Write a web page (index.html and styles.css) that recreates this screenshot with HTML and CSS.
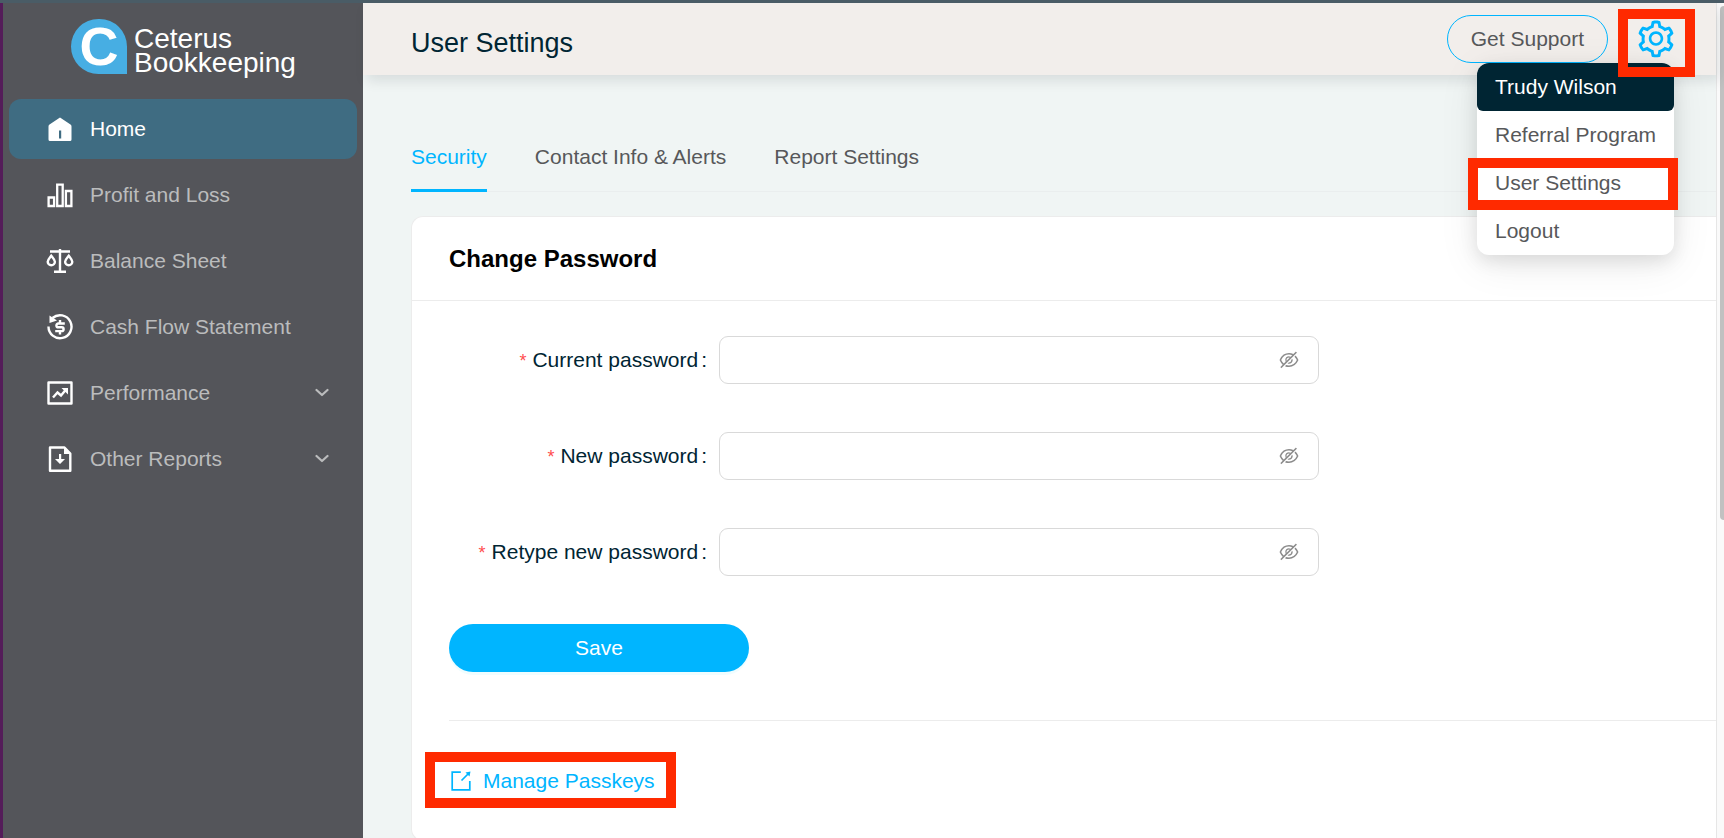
FILE: index.html
```html
<!DOCTYPE html>
<html lang="en">
<head>
<meta charset="utf-8">
<title>User Settings - Ceterus Bookkeeping</title>
<link rel="stylesheet" href="styles.css">
</head>
<body>
<svg class="sprite" aria-hidden="true">
  <symbol id="eye-off" viewBox="0 0 1024 1024">
    <path d="M942.2 486.2Q889.47 375.11 816.7 305l-50.88 50.88C807.31 395.53 843.45 447.4 874.7 512 791.5 684.2 673.4 766 512 766q-72.67 0-133.87-22.38L323 798.75Q408 838 512 838q288.3 0 430.2-300.3a60.29 60.29 0 000-51.5zm-63.57-320.64L836 122.88a8 8 0 00-11.32 0L715.31 232.2Q624.86 186 512 186q-288.3 0-430.2 300.3a60.3 60.3 0 000 51.5q56.69 119.4 136.5 191.41L112.48 835a8 8 0 000 11.31L155.17 889a8 8 0 0011.31 0l712.15-712.12a8 8 0 000-11.32zM149.3 512C232.6 339.8 350.7 258 512 258c54.54 0 104.13 9.36 149.12 28.39l-70.3 70.3a176 176 0 00-238.13 238.13l-83.42 83.42C223.1 637.49 183.3 582.28 149.3 512zm246.7 0a112.11 112.11 0 01146.2-106.69L401.31 546.2A112 112 0 01396 512z"/>
    <path d="M508 624c-3.46 0-6.87-.16-10.25-.47l-52.82 52.82a176.09 176.09 0 00227.42-227.42l-52.82 52.82c.31 3.38.47 6.79.47 10.25a111.94 111.94 0 01-112 112z"/>
  </symbol>
  <symbol id="chevron" viewBox="0 0 14 14">
    <path d="M1.5 4 7 9l5.500-5" fill="none" stroke="currentColor" stroke-width="2.200" stroke-linecap="round" stroke-linejoin="round"/>
  </symbol>
</svg>
<div class="app">
  <aside class="sidebar">
    <a class="logo" href="#">
      <span class="logo-mark">C</span>
      <span class="logo-name"><span>Ceterus</span><span>Bookkeeping</span></span>
    </a>
    <nav class="nav">
      <a class="nav-item active" href="#">
        <svg class="nav-icon" viewBox="0 0 28 28"><path fill="currentColor" fill-rule="evenodd" d="M14 2.500 24.500 9.500q1 .7 1 2V24.500a1.500 1.500 0 0 1-1.500 1.500H4A1.500 1.500 0 0 1 2.500 24.500V11.500q0-1.300 1-2zM13 15.500v8h2.200v-8z"/></svg>
        <span>Home</span>
      </a>
      <a class="nav-item" href="#">
        <svg class="nav-icon" viewBox="0 0 28 28"><path fill="none" stroke="currentColor" stroke-width="2.300" d="M2.600 16.500h5.500v8.500H2.600zM11.200 3.600h5.500V25h-5.500zM19.900 10h5.500v15h-5.500z"/></svg>
        <span>Profit and Loss</span>
      </a>
      <a class="nav-item" href="#">
        <svg class="nav-icon" viewBox="0 0 28 28"><path fill="none" stroke="currentColor" stroke-width="2.400" d="M4 4.500h20M14 2v22.500M8 24.800h12M5.200 8.800c-1.800 2.300-3.500 4-3.500 5.900a3.600 3.600 0 0 0 7.200 0c0-1.900-1.900-3.600-3.700-5.900zM22.800 8.800c-1.800 2.300-3.700 4-3.700 5.900a3.600 3.600 0 0 0 7.200 0c0-1.900-1.700-3.600-3.500-5.900z"/></svg>
        <span>Balance Sheet</span>
      </a>
      <a class="nav-item" href="#">
        <svg class="nav-icon" viewBox="0 0 28 28"><path fill="none" stroke="currentColor" stroke-width="2.400" d="M6.500 5A11.500 11.500 0 1 1 2.500 13.500M18.800 10.500H12.300a1.900 1.900 0 0 0 0 3.800h3.400a1.900 1.900 0 0 1 0 3.800H9.200M14 7v3.500M14 18v3.500"/><path fill="currentColor" d="M3.500 2.500 11 7.500l-7.500 2.500z"/></svg>
        <span>Cash Flow Statement</span>
      </a>
      <a class="nav-item" href="#">
        <svg class="nav-icon" viewBox="0 0 28 28"><path fill="none" stroke="currentColor" stroke-width="2.400" stroke-linejoin="round" d="M2.500 3.500h23v21h-23z"/><path fill="none" stroke="currentColor" stroke-width="2.400" d="M7 18.500l4.500-5 3.500 3 5-6"/><path fill="currentColor" d="M15.500 9H22v6.500z"/></svg>
        <span>Performance</span>
        <svg class="nav-chevron"><use href="#chevron"/></svg>
      </a>
      <a class="nav-item" href="#">
        <svg class="nav-icon" viewBox="0 0 28 28"><path fill="none" stroke="currentColor" stroke-width="2.400" stroke-linejoin="round" d="M4 2.500h14.500l5.800 6v17.200H4z"/><path fill="currentColor" d="M18 2l7 7h-7zM13 9h2.200v5H19l-5 5-5-5h4z"/></svg>
        <span>Other Reports</span>
        <svg class="nav-chevron"><use href="#chevron"/></svg>
      </a>
    </nav>
  </aside>

  <div class="content">
    <header class="header">
      <h1 class="title">User Settings</h1>
      <div class="actions">
        <button class="support" type="button">Get Support</button>
        <div class="account">
          <button class="gear" type="button" aria-label="Settings">
            <svg viewBox="0 0 1024 1024"><path d="M924.8 625.7l-65.5-56c3.1-19 4.7-38.4 4.7-57.8s-1.6-38.800-4.7-57.800l65.5-56a32.030 32.030 0 009.3-35.200l-.9-2.600a443.740 443.740 0 00-79.700-137.900l-1.800-2.100a32.120 32.120 0 00-35.100-9.500l-81.300 28.900c-30-24.600-63.500-44-99.700-57.600l-15.700-85a32.050 32.050 0 00-25.800-25.700l-2.700-.5c-52.100-9.400-106.900-9.400-159 0l-2.700.5a32.050 32.050 0 00-25.800 25.700l-15.800 85.400a351.860 351.860 0 00-99 57.400l-81.900-29.100a32 32 0 00-35.100 9.500l-1.800 2.100a446.020 446.020 0 00-79.700 137.900l-.9 2.600c-4.500 12.500-.8 26.500 9.300 35.200l66.300 56.600c-3.100 18.800-4.600 38-4.600 57.100 0 19.200 1.500 38.400 4.600 57.100L99 625.500a32.030 32.030 0 00-9.300 35.200l.9 2.600c18.100 50.400 44.900 96.900 79.700 137.900l1.800 2.100a32.120 32.120 0 0035.100 9.500l81.900-29.100c29.800 24.500 63.100 43.900 99 57.400l15.800 85.400a32.050 32.050 0 0025.800 25.700l2.700.5a449.400 449.400 0 00159 0l2.700-.5a32.050 32.050 0 0025.800-25.700l15.700-85a350 350 0 0099.700-57.600l81.300 28.900a32 32 0 0035.100-9.500l1.800-2.100c34.800-41.100 61.600-87.500 79.700-137.900l.9-2.600c4.500-12.300.8-26.300-9.300-35zM788.300 465.900c2.500 15.100 3.800 30.600 3.800 46.100s-1.300 31-3.800 46.100l-6.600 40.100 74.700 63.900a370.030 370.030 0 01-42.600 73.600L721 702.800l-31.400 25.800c-23.900 19.600-50.500 35-79.300 45.800l-38.100 14.300-17.900 97a377.500 377.500 0 01-85 0l-17.900-97.200-37.800-14.500c-28.500-10.800-55-26.200-78.700-45.700l-31.400-25.900-93.400 33.200c-17-22.900-31.200-47.600-42.600-73.600l75.500-64.500-6.500-40c-2.400-14.900-3.700-30.300-3.700-45.500 0-15.300 1.200-30.600 3.700-45.500l6.500-40-75.500-64.500c11.300-26.100 25.600-50.700 42.600-73.600l93.400 33.200 31.400-25.900c23.700-19.500 50.200-34.900 78.700-45.700l37.900-14.300 17.900-97.200c28.100-3.200 56.800-3.200 85 0l17.900 97 38.100 14.300c28.700 10.800 55.400 26.200 79.300 45.800l31.400 25.800 92.800-32.900c17 22.900 31.200 47.600 42.600 73.600L781.800 426l6.500 39.900zM512 326c-97.200 0-176 78.800-176 176s78.800 176 176 176 176-78.800 176-176-78.800-176-176-176zm79.200 255.200A111.600 111.600 0 01512 614c-29.900 0-58-11.700-79.200-32.800A111.600 111.600 0 01400 502c0-29.900 11.700-58 32.800-79.200C454 401.600 482.100 390 512 390c29.900 0 58 11.600 79.200 32.800A111.600 111.600 0 01624 502c0 29.900-11.700 58-32.800 79.200z"/></svg>
          </button>
          <div class="menu">
            <div class="menu-name">Trudy Wilson</div>
            <a class="menu-item" href="#">Referral Program</a>
            <a class="menu-item marked" href="#">User Settings</a>
            <a class="menu-item" href="#">Logout</a>
          </div>
        </div>
      </div>
    </header>

    <main class="main">
      <nav class="tabs">
        <a class="tab selected" href="#">Security</a>
        <a class="tab" href="#">Contact Info &amp; Alerts</a>
        <a class="tab" href="#">Report Settings</a>
      </nav>
      <section class="card">
        <h2 class="card-title">Change Password</h2>
        <div class="card-body">
          <form class="form">
            <div class="field">
              <label class="label" for="current">Current password</label>
              <div class="control">
                <input id="current" type="password">
                <button class="reveal" type="button" aria-label="Show current password"><svg><use href="#eye-off"/></svg></button>
              </div>
            </div>
            <div class="field">
              <label class="label" for="new">New password</label>
              <div class="control">
                <input id="new" type="password">
                <button class="reveal" type="button" aria-label="Show new password"><svg><use href="#eye-off"/></svg></button>
              </div>
            </div>
            <div class="field">
              <label class="label" for="retype">Retype new password</label>
              <div class="control">
                <input id="retype" type="password">
                <button class="reveal" type="button" aria-label="Show retyped password"><svg><use href="#eye-off"/></svg></button>
              </div>
            </div>
            <button class="save" type="submit">Save</button>
          </form>
          <div class="passkeys">
            <a class="passkeys-link" href="#">
              <svg viewBox="0 0 20 20"><path fill="none" stroke="currentColor" stroke-width="1.700" d="M9.800 1.200H1.200v17.600h17.600v-8.800M10.500 9.500 17 3"/><path fill="currentColor" d="M14.500 1.500 19.500.5l-1 5z"/></svg>
              <span>Manage Passkeys</span>
            </a>
          </div>
        </div>
      </section>
    </main>
  </div>
  <div class="scrollbar"><div class="thumb"></div></div>
</div>
</body>
</html>
```
FILE: styles.css
```css
* { box-sizing: border-box; }

body {
  margin: 0;
  font-family: "Liberation Sans", Arial, sans-serif;
  font-size: 21px;
  line-height: 24px;
  color: #002533;
}

a { color: inherit; text-decoration: none; }
button, input { font: inherit; color: inherit; }
button { cursor: pointer; padding: 0; background: none; border: 0; }
.sprite { position: absolute; width: 0; height: 0; }

.app {
  display: flex;
  height: 100vh;
  overflow: hidden;
  border-top: 3px solid #4a5c66;
  background: #f0f5f4;
}

/* Sidebar */
.sidebar {
  flex: 0 0 363px;
  padding: 0 6px;
  border-left: 3px solid #541c59;
  background: #54555a;
  color: #fff;
}

.logo {
  display: flex;
  align-items: center;
  gap: 7px;
  height: 96px;
  padding: 0 0 10px 62px;
}

.logo-mark {
  width: 56px;
  height: 55px;
  border-radius: 28px 28px 0 28px;
  background: #47aee3;
  font-size: 54px;
  font-weight: bold;
  line-height: 55px;
  text-align: center;
}

.logo-name {
  display: flex;
  flex-direction: column;
  padding-top: 9px;
  font-size: 28px;
  line-height: 24px;
}

.nav { display: flex; flex-direction: column; gap: 6px; }

.nav-item {
  display: flex;
  align-items: center;
  gap: 16px;
  height: 60px;
  padding: 0 28px 0 37px;
  border-radius: 12px;
  color: #bbbcbd;
}

.nav-item.active { background: #3f6c82; color: #fff; }
.nav-icon { width: 28px; height: 28px; color: #fff; }
.nav-chevron { width: 14px; height: 14px; margin-left: auto; }

/* Header */
.content { flex: 1; min-width: 0; display: flex; flex-direction: column; }

.header {
  position: relative;
  z-index: 1;
  flex: none;
  display: flex;
  align-items: center;
  justify-content: space-between;
  height: 72px;
  padding: 0 39px 0 48px;
  background: #f2eeeb;
  box-shadow: 4px 6px 12px rgba(0, 21, 30, .1);
}

.title { margin: 0; padding-top: 8px; font-size: 27px; font-weight: normal; line-height: 32px; }
.actions { display: flex; align-items: center; gap: 27px; }

.support {
  height: 48px;
  padding: 0 23px;
  border: 1px solid #00b5ff;
  border-radius: 24px;
  color: #57585a;
}

.account { position: relative; }
.gear { display: block; }
.gear svg { display: block; width: 42px; height: 42px; fill: #00b5ff; }

/* Red call-out frames */
.gear::after,
.marked::after,
.passkeys-link::after {
  content: "";
  position: absolute;
  z-index: 2;
  border: 10px solid #ff2a00;
}

.gear::after { inset: -9px -18px -17px -17px; }

.menu {
  position: absolute;
  top: 45px;
  right: 3px;
  width: 197px;
  border-radius: 12px;
  background: #fff;
  box-shadow: 0 9px 42px rgba(0, 0, 0, .08), 0 6px 18px rgba(0, 0, 0, .1);
  color: #57585a;
  white-space: nowrap;
}

.menu-name,
.menu-item { display: block; padding: 12px 18px; }
.menu-name { border-radius: 12px 12px 6px 6px; background: #002533; color: #fff; }
.marked { position: relative; }
.marked::after { inset: -1px -4px -3px -9px; }

/* Page body */
.main { flex: 1; min-height: 0; padding: 48px 0 0 48px; }

.tabs { display: flex; gap: 48px; border-bottom: 1px solid #eaeeee; }
.tab { padding: 22px 0 20px; margin-bottom: -1px; border-bottom: 3px solid transparent; color: #57585a; }
.tab.selected { border-color: #00b5ff; color: #00b5ff; }

.card {
  margin-top: 24px;
  border: 1px solid #ececec;
  border-right: 0;
  border-radius: 12px 0 0 12px;
  background: #fff;
}

.card-title {
  margin: 0;
  padding: 29px 37px 28px;
  border-bottom: 1px solid #ececec;
  color: #000;
  font-size: 24px;
  line-height: 26px;
}

.card-body { padding: 35px 0 33px 37px; }
.form { padding-bottom: 48px; border-bottom: 1px solid #ececec; }
.field { display: flex; align-items: center; margin-bottom: 48px; }
.label { flex: 0 0 270px; padding-right: 12px; text-align: right; }

.label::before {
  content: "*";
  margin-right: 6px;
  color: #ff4d4f;
  font-size: 18px;
}

.label::after { content: ":"; margin-left: 3px; }

.control {
  display: flex;
  align-items: center;
  flex: 0 1 600px;
  height: 48px;
  padding: 0 18px;
  border: 1px solid #d9d9d9;
  border-radius: 9px;
}

.control input { flex: 1; min-width: 0; height: 36px; padding: 0; border: 0; outline: 0; background: none; }
.reveal svg { display: block; width: 22px; height: 22px; fill: #8c8c8c; }

.save {
  display: block;
  width: 300px;
  height: 48px;
  border-radius: 24px;
  background: #00b5ff;
  box-shadow: 0 3px 0 rgba(5, 225, 255, .06);
  color: #fff;
}

.passkeys { padding: 48px 0 11px; }
.passkeys-link { position: relative; display: inline-flex; align-items: center; gap: 12px; padding-left: 2px; color: #00b5ff; }
.passkeys-link svg { width: 20px; height: 20px; }
.passkeys-link::after { inset: -17px -21px -15px -24px; }

/* Scroll track */
.scrollbar { flex: 0 0 8px; padding: 3px 0 0 3px; border-left: 1px solid #e6e6e6; background: #fafafa; }
.thumb { height: 514px; border-radius: 4px 0 0 4px; background: #c1c1c1; }
```
